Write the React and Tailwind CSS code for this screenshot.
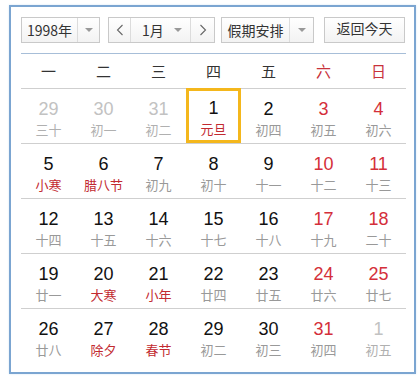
import React from 'react';

const weekdays = ['一', '二', '三', '四', '五', '六', '日'];

// n: day, l: lunar text, o: other month, h: holiday (red lunar), t: today
const weeks = [
  [
    { n: 29, l: '三十', o: true },
    { n: 30, l: '初一', o: true },
    { n: 31, l: '初二', o: true },
    { n: 1, l: '元旦', h: true, t: true },
    { n: 2, l: '初四' },
    { n: 3, l: '初五' },
    { n: 4, l: '初六' },
  ],
  [
    { n: 5, l: '小寒', h: true },
    { n: 6, l: '腊八节', h: true },
    { n: 7, l: '初九' },
    { n: 8, l: '初十' },
    { n: 9, l: '十一' },
    { n: 10, l: '十二' },
    { n: 11, l: '十三' },
  ],
  [
    { n: 12, l: '十四' },
    { n: 13, l: '十五' },
    { n: 14, l: '十六' },
    { n: 15, l: '十七' },
    { n: 16, l: '十八' },
    { n: 17, l: '十九' },
    { n: 18, l: '二十' },
  ],
  [
    { n: 19, l: '廿一' },
    { n: 20, l: '大寒', h: true },
    { n: 21, l: '小年', h: true },
    { n: 22, l: '廿四' },
    { n: 23, l: '廿五' },
    { n: 24, l: '廿六' },
    { n: 25, l: '廿七' },
  ],
  [
    { n: 26, l: '廿八' },
    { n: 27, l: '除夕', h: true },
    { n: 28, l: '春节', h: true },
    { n: 29, l: '初二' },
    { n: 30, l: '初三' },
    { n: 31, l: '初四' },
    { n: 1, l: '初五', o: true },
  ],
];

const cjk = "font-['Microsoft_YaHei','Noto_Sans_CJK_SC',sans-serif]";
const num = "font-['Liberation_Sans',Arial,sans-serif]";

const Arrow = () => (
  <span className="w-0 h-0 border-x-[4px] border-x-transparent border-t-[4px] border-t-[#999]" />
);

const Chevron = ({ dir }) => (
  <svg width="8" height="12" viewBox="0 0 8 12">
    <polyline
      points={dir === 'left' ? '6.5,1 1.5,6 6.5,11' : '1.5,1 6.5,6 1.5,11'}
      fill="none"
      stroke="#666"
      strokeWidth="1.1"
    />
  </svg>
);

const boxCls = 'h-[26px] border border-[#c9c9c9] bg-gradient-to-b from-white to-[#f3f3f3] flex items-stretch text-[14px] text-[#333]';

const Day = ({ d, col }) => {
  const weekend = col >= 5;
  let numColor = weekend ? 'text-[#d42f3a]' : 'text-[#111]';
  let lunColor = d.h ? 'text-[#c22a30]' : 'text-[#999]';
  if (d.o) {
    numColor = 'text-[#c2c2c2]';
    lunColor = 'text-[#b0b0b0]';
  }
  return (
    <div
      className={`flex flex-col items-center pt-[7px] ${
        d.t ? 'border-[3px] border-[#f4b71c] -mt-px' : 'border-[3px] border-transparent'
      }`}
    >
      <div className={`${num} text-[18px] leading-[20px] ${numColor}`}>{d.n}</div>
      <div className={`${cjk} text-[13px] leading-[18px] mt-[2px] ${lunColor}`}>{d.l}</div>
    </div>
  );
};

export default function App() {
  return (
    <div className="w-[420px] h-[381px] bg-white pt-[5px] pl-[9px]">
      <div className={`w-[407px] h-[369px] border-2 border-[#7ba5d1] bg-white pt-[10px] pl-[10px] pr-[8px] shadow-[0_0_2px_#d6e6f5] ${cjk}`}>
        {/* Controls */}
        <div className="flex items-center">
          <div className={`${boxCls} w-[79px]`}>
            <div className="flex-1 flex items-center justify-center">1998年</div>
            <div className="w-[22px] border-l border-[#dcdcdc] flex items-center justify-center">
              <Arrow />
            </div>
          </div>
          <div className={`${boxCls} w-[107px] ml-[8px]`}>
            <div className="w-[22px] border-r border-[#dcdcdc] flex items-center justify-center">
              <Chevron dir="left" />
            </div>
            <div className="flex-1 flex items-center pl-[11px] pr-[8px] justify-between">
              <span>1月</span>
              <Arrow />
            </div>
            <div className="w-[24px] border-l border-[#dcdcdc] flex items-center justify-center">
              <Chevron dir="right" />
            </div>
          </div>
          <div className={`${boxCls} w-[93px] ml-[6px]`}>
            <div className="flex-1 flex items-center justify-center">假期安排</div>
            <div className="w-[24px] border-l border-[#dcdcdc] flex items-center justify-center">
              <Arrow />
            </div>
          </div>
          <div className={`${boxCls} w-[81px] ml-[10px] justify-center items-center`}>返回今天</div>
        </div>

        {/* Header line */}
        <div className="mt-[10px] w-[385px] border-t border-[#a7bed8]" />

        {/* Weekdays */}
        <div className="w-[385px] grid grid-cols-7 h-[34px] items-center">
          {weekdays.map((w, i) => (
            <div
              key={w}
              className={`text-center text-[15px] ${i >= 5 ? 'text-[#c8323b]' : 'text-[#333]'}`}
            >
              {w}
            </div>
          ))}
        </div>

        {/* Weeks */}
        {weeks.map((week, wi) => (
          <div key={wi} className="w-[385px] grid grid-cols-7 h-[55px] border-t border-[#cfcfcf]">
            {week.map((d, i) => (
              <Day key={i} d={d} col={i} />
            ))}
          </div>
        ))}
      </div>
    </div>
  );
}
